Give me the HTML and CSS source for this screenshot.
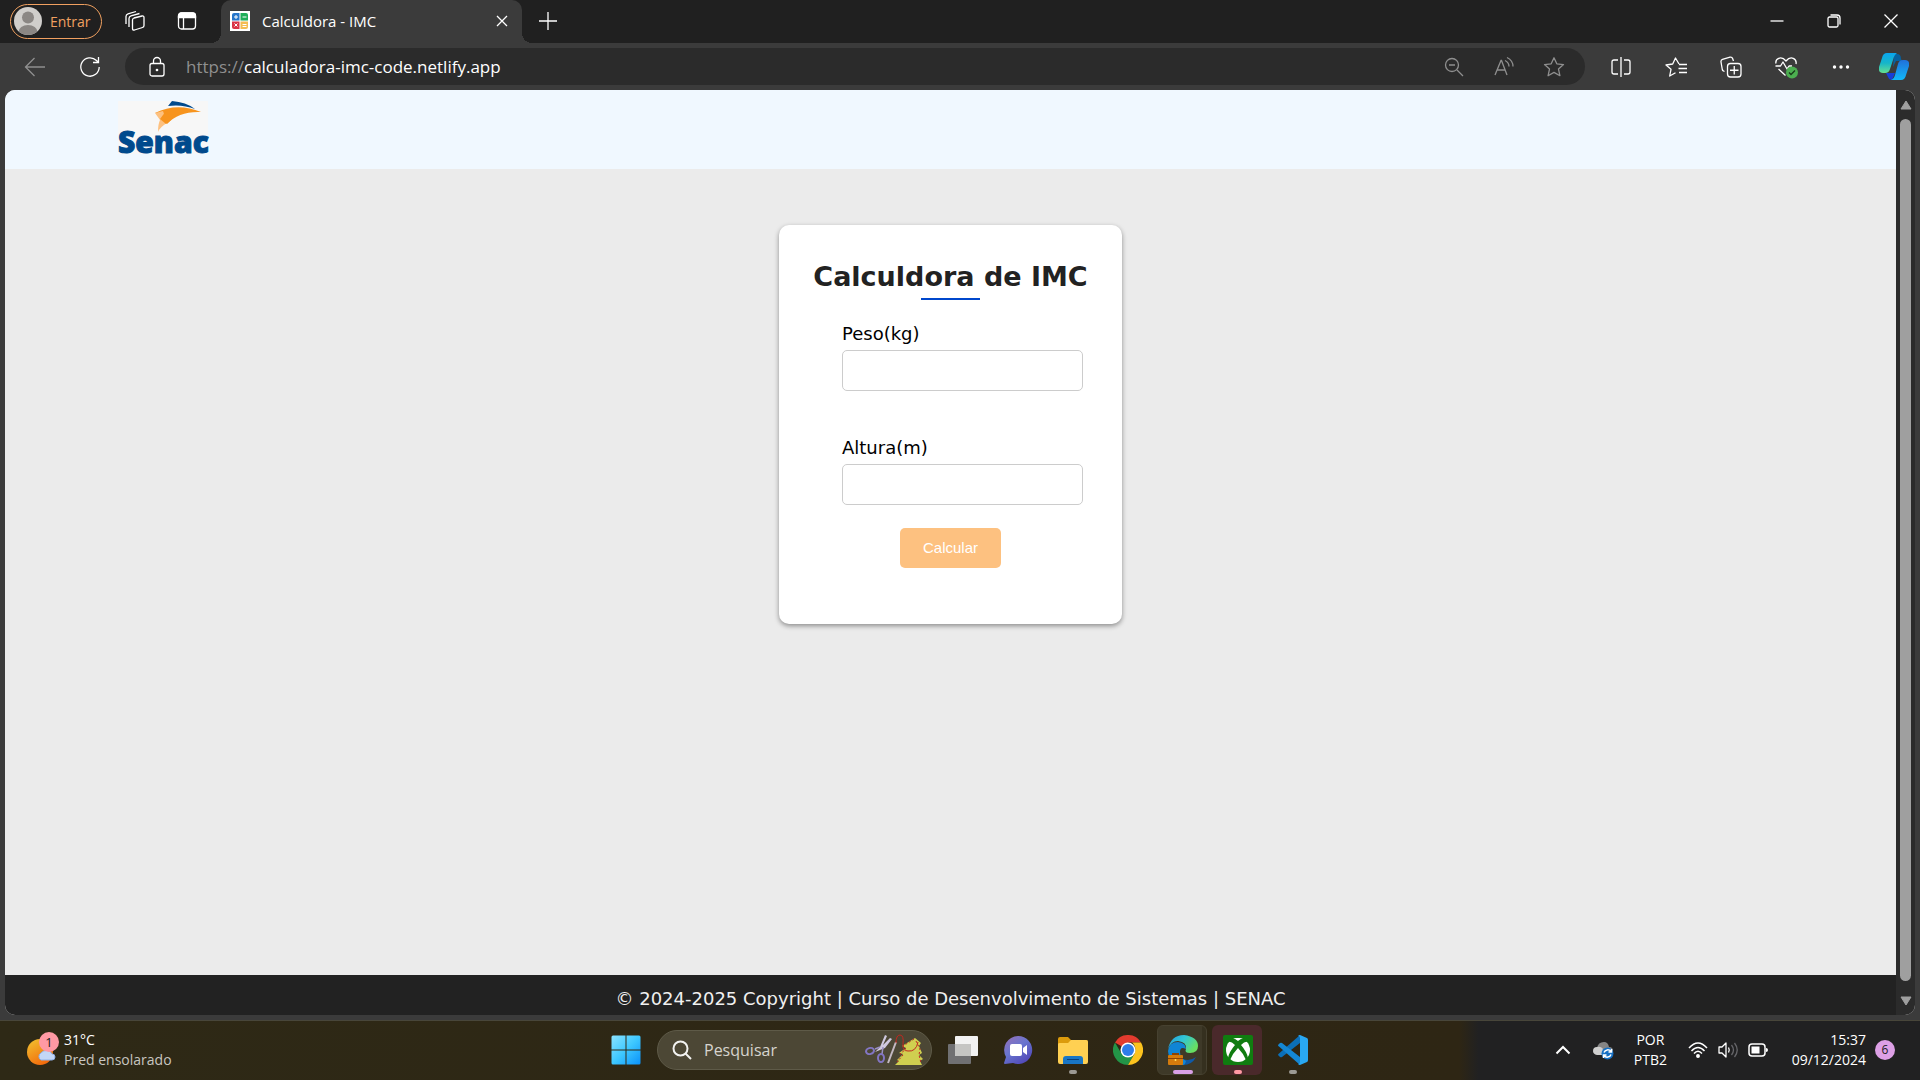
FILE: index.html
```html
<!DOCTYPE html>
<html lang="pt-BR">
<head>
<meta charset="utf-8">
<meta name="viewport" content="width=device-width, initial-scale=1">
<title>Calculdora - IMC</title>
<link rel="stylesheet" href="styles.css">
</head>
<body>
<div class="screen">
  <div class="tabbar">
    <button class="profile" type="button">
      <svg class="avatar" width="28" height="28" viewBox="0 0 28 28"><defs><clipPath id="av"><circle cx="14" cy="14" r="14"/></clipPath></defs><g clip-path="url(#av)"><rect width="28" height="28" fill="#d0cecb"/><circle cx="14" cy="10.500" r="6" fill="#8b8784"/><ellipse cx="14" cy="25" rx="9.500" ry="7" fill="#8b8784"/></g></svg>
      <span>Entrar</span>
    </button>
    <button class="tab-tool" type="button" aria-label="Workspaces">
      <svg class="line" width="22" height="22" viewBox="0 0 22 22"><path stroke-linejoin="round" d="M8.500 10q0-1.500 1.500-2l8-2q2-.4 2 1.500v8q0 1.500-1.500 2l-8 2.500q-2 .5-2-1.500zM5 17V8.500q0-2 2-2.600L15.500 3.500M2 14V6.500q0-2 2-2.600L12 1.500"/></svg>
    </button>
    <button class="tab-tool" type="button" aria-label="Guias">
      <svg class="line" width="20" height="20" viewBox="0 0 20 20"><rect x="1.500" y="2" width="17" height="16" rx="3"/><path d="M6.500 6v12"/><path d="M1.500 6.500V5q0-3 3-3h11q3 0 3 3v1.500z" fill="#fff"/></svg>
    </button>
    <div class="tab">
      <svg width="20" height="20" viewBox="0 0 20 20"><path fill="#fff" d="M0 0h20v20H0z"/><path fill="#2675c9" d="M2 4q0-2 2-2h5.500v7.500H2z"/><path fill="#1fae58" d="M10.500 2H16q2 0 2 2v5.500h-7.500z"/><path fill="#d93448" d="M2 10.500h7.500V18H4q-2 0-2-2z"/><path fill="#f4bc52" d="M10.500 10.500H18V16q0 2-2 2h-5.500z"/><path stroke="#fff" d="M4 6h4M6 4v4M12.500 6h4M4.500 12.500l3 3M7.500 12.500l-3 3M12.500 13.500h4M12.500 15.500h4"/></svg>
      <span class="tab-title">Calculdora - IMC</span>
      <button class="tab-close" type="button" aria-label="Fechar guia"><svg class="line" width="12" height="12" viewBox="0 0 12 12"><path d="M1 1l10 10M11 1L1 11"/></svg></button>
    </div>
    <button class="new-tab" type="button" aria-label="Nova guia"><svg class="line" width="18" height="18" viewBox="0 0 18 18"><path d="M9 0v18M0 9h18"/></svg></button>
    <div class="window-controls">
      <button type="button" aria-label="Minimizar"><svg class="line" width="14" height="14" viewBox="0 0 14 14"><path d="M.5 7h13"/></svg></button>
      <button type="button" aria-label="Restaurar"><svg class="line" width="14" height="14" viewBox="0 0 14 14"><rect x="1" y="3" width="10" height="10" rx="1.500"/><path d="M3.500 1H10q3 0 3 3v6.500"/></svg></button>
      <button type="button" aria-label="Fechar"><svg class="line" width="14" height="14" viewBox="0 0 14 14"><path d="M.5.5l13 13M13.500.5l-13 13"/></svg></button>
    </div>
  </div>

  <div class="toolbar">
    <button class="nav dim" type="button" aria-label="Voltar"><svg class="line" width="22" height="22" viewBox="0 0 22 22"><path d="M21 11H1.500M10.500 2L1.500 11l9 9"/></svg></button>
    <button class="nav" type="button" aria-label="Atualizar"><svg class="line" width="22" height="22" viewBox="0 0 22 22"><path d="M20.200 11A9.200 9.200 0 1 1 17.500 4.500L19.500 6.500M19.500 1v5.500H14"/></svg></button>
    <div class="address">
      <svg class="line lock" width="16" height="22" viewBox="0 0 16 22"><rect x="1" y="7.500" width="14" height="12.500" rx="2"/><path d="M4.500 7.500V5a3.500 3.500 0 0 1 7 0v2.500"/><circle cx="8" cy="14" r=".7"/></svg>
      <span class="url"><span class="scheme">https://</span>calculadora-imc-code.netlify.app</span>
      <div class="address-tools dim">
        <button type="button" aria-label="Zoom"><svg class="line" width="20" height="20" viewBox="0 0 20 20"><circle cx="8" cy="8" r="6.500"/><path d="M13 13l6 6M5 8h6"/></svg></button>
        <button type="button" aria-label="Ler em voz alta"><svg class="line" width="22" height="22" viewBox="0 0 22 22"><path d="M2 19L8 4.500h.5L14 19M4 14h8M12 4.500q4 2 4 6M14 1.500q6 3 6 9"/></svg></button>
        <button type="button" aria-label="Favoritar"><svg class="line" width="22" height="22" viewBox="0 0 22 22"><path stroke-linejoin="round" d="M11 1.800l2.800 6 6.700.8-5 4.500 1.400 6.600L11 16.400l-5.900 3.300 1.400-6.600-5-4.500 6.700-.8z"/></svg></button>
      </div>
    </div>
    <div class="tools">
      <button type="button" aria-label="Dividir tela"><svg class="line" width="20" height="20" viewBox="0 0 20 20"><path d="M7 3H3q-2 0-2 2v10q0 2 2 2h4M13 3h4q2 0 2 2v10q0 2-2 2h-4M10 0v20"/></svg></button>
      <button type="button" aria-label="Favoritos"><svg class="line" width="22" height="22" viewBox="0 0 22 22"><path stroke-linejoin="round" d="M14 8L10.500 2 7.700 8 1 9l5 4.300L4.700 20l5.800-3.200M14 8.500h8M13.500 12.500H22M14 16.500h8"/></svg></button>
      <button type="button" aria-label="Coleções"><svg class="line" width="22" height="22" viewBox="0 0 22 22"><path d="M4.500 15.500l-1-.5q-1-.5-1.200-1.500L1 6q-.3-2 1.500-2.600L10 1.200q2-.4 2.600 1.300l.9 2.500"/><rect x="7.500" y="7.500" width="13.500" height="13.500" rx="3"/><path d="M14.250 10v8.500M10 14.250h8.500"/></svg></button>
      <button type="button" aria-label="Desempenho"><svg class="line" width="24" height="24" viewBox="0 0 24 24"><path stroke-linejoin="round" d="M2 8.500C1 4 7 0 12 6c5-6 11-2 10 3M1.500 11h5l2.500-4 4 7 2-3h3M4.500 14l7 6.500"/><circle cx="18" cy="17.500" r="6" fill="#4caf50" stroke="none"/><path d="M15 17.500l2 2 4-4" stroke="#173a19" /></svg></button>
      <button type="button" aria-label="Mais"><svg width="18" height="6" viewBox="0 0 18 6" fill="#fff"><circle cx="2.500" cy="3" r="1.700"/><circle cx="9" cy="3" r="1.700"/><circle cx="15.500" cy="3" r="1.700"/></svg></button>
      <button type="button" aria-label="Copilot"><svg width="30" height="28" viewBox="0 0 30 28"><defs><linearGradient id="cp1" x1="0" y1="0" x2="0" y2="1"><stop offset="0" stop-color="#0aa5ee"/><stop offset=".5" stop-color="#16b5c9"/><stop offset="1" stop-color="#65df91"/></linearGradient><linearGradient id="cp2" x1="0" y1="0" x2="0" y2="1"><stop offset="0" stop-color="#2170d9"/><stop offset="1" stop-color="#11b9fa"/></linearGradient></defs><path fill="#07619f" d="M15 1h3q4 0 4 5l1 2h-6l-3 6z"/><path fill="#173fd8" d="M7 20h9l-3 7q-3 0-4-3z"/><path fill="url(#cp1)" d="M8 0h10q-3 2-4 7l-3 9q-1 4-5 4H4q-5 0-4-6L3 5q1-5 5-5z"/><path fill="url(#cp2)" d="M22 27H12q3-1 4-5l3-11q1-4 5-4h2q5 0 4 6l-3 9q-1 5-5 5z"/></svg></button>
    </div>
  </div>

  <div class="viewport">
    <div class="page">
      <header class="site-header">
        <svg class="logo" width="90" height="53" viewBox="0 0 90 53" role="img" aria-label="Senac"><path fill="#f7f7f7" d="M0 0h90v53H0z"/><path fill="#004a8d" d="M50 5L54 0q14 1 23 8-13-5-27-3z"/><path fill="#f7941e" d="M37 12q22-11 46-1-22-1-34 12l-7-11z"/><path fill="#fdc180" d="M37 12l8-2 4 12q-7 4-9 9 0-8 2-12z"/><path fill="#f7941e" d="M42 18l6-8 5 9-5 4z"/><text class="logo-word" x="0" y="52">Senac</text></svg>
      </header>
      <main class="content">
        <form class="card">
          <h1>Calculdora de IMC</h1>
          <div class="field"><label for="peso">Peso(kg)</label><input id="peso" type="text"></div>
          <div class="field"><label for="altura">Altura(m)</label><input id="altura" type="text"></div>
          <button class="calc" type="button">Calcular</button>
        </form>
      </main>
      <footer class="site-footer">© 2024-2025 Copyright | Curso de Desenvolvimento de Sistemas | SENAC</footer>
    </div>
    <div class="scrollbar">
      <svg width="12" height="10" viewBox="0 0 12 10"><path fill="#9f9f9f" stroke="#9f9f9f" stroke-linejoin="round" d="M6 1l5 8H1z"/></svg>
      <div class="thumb"></div>
      <svg width="12" height="10" viewBox="0 0 12 10"><path fill="#9f9f9f" stroke="#9f9f9f" stroke-linejoin="round" d="M6 9L1 1h10z"/></svg>
    </div>
  </div>

  <div class="taskbar">
    <div class="weather">
      <svg width="32" height="36" viewBox="0 0 32 36"><defs><linearGradient id="sun" x1="0" y1="0" x2=".6" y2="1"><stop offset="0" stop-color="#f2c530"/><stop offset="1" stop-color="#f26a0c"/></linearGradient></defs><circle cx="13" cy="20" r="13" fill="url(#sun)"/><path fill="#c3d7f7" stroke="#8fb0e6" d="M14 28a4 4 0 0 1 0-7 6 5 0 0 1 11 1 3 3 0 0 1 0 6z"/><circle cx="22" cy="10" r="10" fill="#ff99a4"/><text class="badge-text" x="22" y="15">1</text></svg>
      <div class="weather-text"><span>31°C</span><span class="muted">Pred ensolarado</span></div>
    </div>
    <div class="apps">
      <button class="app" type="button" aria-label="Iniciar"><svg width="30" height="30" viewBox="0 0 30 30"><defs><linearGradient id="win" x1="0" y1="0" x2="1" y2="1"><stop offset="0" stop-color="#8be3ff"/><stop offset=".5" stop-color="#3ec8ff"/><stop offset="1" stop-color="#0a91fa"/></linearGradient></defs><path fill="url(#win)" d="M2 .5h12.500v14H.5V2Q.5.500 2 .5zM15.500.5H28Q29.500.500 29.500 2v12.500h-14zM.5 15.500h14v14H2Q.5 29.500.5 28zM15.500 15.500h14V28q0 1.500-1.500 1.500H15.500z"/></svg></button>
      <label class="search">
        <svg width="20" height="20" viewBox="0 0 20 20" fill="none" stroke="#f2f2f0" stroke-width="2"><circle cx="8.500" cy="8.500" r="7"/><path d="M13.500 13.500L19 19"/></svg>
        <input type="text" placeholder="Pesquisar" aria-label="Pesquisar">
        <svg width="58" height="34" viewBox="0 0 58 34" fill="none"><path fill="#cfc9df" d="M20 2l2 1-4 9 7-7 2 1-7 9-5 2-5 2 5-5z"/><path stroke="#9a90c4" stroke-width="1.500" d="M15 14l-5 2M18 14l-1 7"/><g stroke="#8376c4" stroke-width="2"><ellipse cx="5" cy="18" rx="4" ry="3" transform="rotate(-15 5 18)"/><ellipse cx="16" cy="25" rx="3" ry="4"/></g><path stroke="#c4b9c2" stroke-width="2" d="M23 30L31 9"/><path fill="#d0cf50" d="M50 5l-13 8 4 2-7 5 4 1-6 6 2 1-4 4h27l-2-4 3-2-4-4 3-2-3-7 2-3z"/><g stroke="#c12820"><path d="M31 10q0-8 4-8 4 0 3 9-1 7 5 7 8 1 10-9"/><path stroke-dasharray="2 2" d="M49 6l-11 7 3 3-6 5 3 1-6 7M51 8l4 8-1 6 2 8"/></g></svg>
      </label>
      <button class="app after-search" type="button" aria-label="Visão de tarefas"><svg width="30" height="30" viewBox="0 0 30 30"><rect y="9" width="23" height="20" rx="1" fill="#707072"/><rect x="7" y="1" width="23" height="20" rx="1" fill="#f2f2f2"/><path fill="#c5c5c3" d="M7 9h16v12H8q-1 0-1-1z"/></svg></button>
      <button class="app" type="button" aria-label="Chat"><svg width="30" height="30" viewBox="0 0 30 30"><defs><linearGradient id="chat" x1="0" y1="0" x2=".7" y2="1"><stop offset="0" stop-color="#9870b7"/><stop offset=".5" stop-color="#6875cf"/><stop offset="1" stop-color="#5148b8"/></linearGradient></defs><path fill="url(#chat)" d="M15 1a14 14 0 1 1-5 27l-8 1q-1 0-1-1l2-6A14 14 0 0 1 15 1z"/><rect x="7" y="9" width="12" height="12" rx="2" fill="#fff"/><path fill="#fff" d="M20 13l4-3v10l-4-3z"/></svg></button>
      <button class="app running" type="button" aria-label="Explorador"><svg width="30" height="30" viewBox="0 0 30 30"><path fill="#dc9b0c" d="M0 4q0-2 2-2h8l3 3h15q2 0 2 2v5H0z"/><path fill="#ffd052" d="M0 9q0-1 2-1h8l3-3h15q2 0 2 2v20q0 2-2 2H2q-2 0-2-2z"/><path fill="#1976c5" d="M5 29v-5q0-3 3-3h14q3 0 3 3v5z"/><path stroke="#0a3f7a" d="M9 24.500h12"/></svg></button>
      <button class="app" type="button" aria-label="Chrome"><svg width="30" height="30" viewBox="0 0 30 30"><path fill="#e33b2e" d="M15 15L2 7.500A15 15 0 0 1 28 7.500H15z"/><path fill="#239447" d="M15 30A15 15 0 0 1 2 7.500L8.500 18.750 15 22.500 21.500 18.750z"/><path fill="#fcc31e" d="M15 30l6.500-11.250Q24 12 19 7.500h9A15 15 0 0 1 15 30z"/><circle cx="15" cy="15" r="7.500" fill="#fff"/><circle cx="15" cy="15" r="6" fill="#2f7de9"/></svg></button>
      <button class="app active" type="button" aria-label="Edge"><svg width="30" height="30" viewBox="0 0 30 30"><defs><linearGradient id="eg" x1="0" y1="0" x2="1" y2=".5"><stop offset="0" stop-color="#239dde"/><stop offset=".5" stop-color="#31c5d6"/><stop offset="1" stop-color="#68df62"/></linearGradient></defs><path fill="#0f5aa8" d="M11 13q-3 12 9 12 4 0 8-3-4 8-13 8Q2 28 4 15z"/><path fill="#1085d5" d="M0 16Q1 7 10 7q8 1 8 7-6-3-6 3 0 6 6 9-1 4-3 4Q1 29 0 16z"/><path fill="url(#eg)" d="M0 14Q3 0 16 0q14 2 14 11 0 7-8 7-6 0-4-4 1-7-8-8-7 0-10 8z"/><rect y="20" width="15" height="10" rx="1" fill="#d47b0d"/><path fill="#8b4307" d="M0 23h15v1H0zM4 18h7v2H4z"/><circle cx="7.500" cy="25" r="1" fill="#ffe36a"/></svg></button>
      <button class="app alert" type="button" aria-label="Xbox"><svg width="30" height="30" viewBox="0 0 30 30"><rect width="30" height="30" rx="2" fill="#107c10"/><circle cx="15" cy="15" r="12" fill="#fff"/><path fill="#107c10" d="M8 4q4-1 7 2 3-3 7-2l3 3q-3-1-7 3 6 7 7 13l-2 2Q20 18 15 13 10 18 7 25l-2-2q1-6 7-13-4-4-7-3z"/><path fill="#fff" d="M10 3.500q5-1 10 0-3 0-5 1.500-2-1.500-5-1.500z"/></svg></button>
      <button class="app running" type="button" aria-label="Visual Studio Code"><svg width="30" height="30" viewBox="0 0 30 30"><path fill="#0b6fb8" d="M0 20l2 2q1 .5 2 0L22 8V0L1 18.500q-1 .7-1 1.500z"/><path fill="#1487d4" d="M0 10l2-2q1-.5 2 0l18 14v8L1 11.500Q0 11 0 10z"/><path fill="#29a8f2" d="M22 0l7 3q1 .5 1 2v20q0 1.500-1 2l-7 3q-1 0-2-1 2 0 2-2V3q0-2-2-2 1-1 2-1z"/></svg></button>
    </div>
    <div class="tray">
      <svg class="chevron" width="16" height="10" viewBox="0 0 16 10" fill="none" stroke="#fff" stroke-width="2"><path d="M1.500 8.500L8 2l6.500 6.500"/></svg>
      <svg class="cloud" width="22" height="20" viewBox="0 0 22 20"><path fill="#858585" d="M5 8q1-6 7-6 4 0 5 5 4 0 4 4 0 3-3 3H8z"/><path fill="#cfcfcf" d="M5 15q-4-1-4-4 0-4 4-4 5-1 7 4l4 4z"/><circle cx="15.500" cy="13.500" r="6" fill="#1670c4"/><path stroke="#fff" stroke-width="1.500" fill="none" d="M12 12.500a4 4 0 0 1 7-1M19 14.500a4 4 0 0 1-7 1M19.500 9v3h-3M11.500 18v-3h3"/></svg>
      <div class="lang"><span>POR</span><span>PTB2</span></div>
      <svg class="wifi" width="20" height="18" viewBox="0 0 20 18" fill="none" stroke="#fff" stroke-width="1.500"><path d="M1 7q9-10 18 0M3.500 10q6.500-7 13 0M6 12.500q4-4.500 8 0"/><circle cx="10" cy="15" r="1.200" fill="#fff"/></svg>
      <svg class="sound" width="20" height="18" viewBox="0 0 20 18" fill="none" stroke="#fff" stroke-width="1.300"><path stroke-linejoin="round" d="M1 6h3l4-4v14l-4-4H1zM10.500 6.500q1.500 2.500 0 5"/><path stroke="#66666a" d="M13.500 4q4 5 0 10M16.500 2q5.500 7 0 14"/></svg>
      <svg width="20" height="14" viewBox="0 0 20 14"><rect x="1" y="1" width="16" height="12" rx="3" fill="none" stroke="#fff" stroke-width="1.500"/><path fill="#fff" d="M3.500 3.500h8v7h-8zM18 5q2 0 2 2t-2 2z"/></svg>
      <div class="clock"><span>15:37</span><span>09/12/2024</span></div>
      <span class="count">6</span>
    </div>
  </div>
</div>
</body>
</html>
```
FILE: styles.css
```css
* { box-sizing: border-box; }

body {
  margin: 0;
  font-family: "Open Sans", "Noto Sans", sans-serif;
  font-size: 14px;
  color: #fff;
  background: #3b3b3b;
}

button {
  margin: 0;
  padding: 0;
  border: 0;
  background: none;
  color: inherit;
  font: inherit;
}

svg { display: block; flex: none; }

.line { fill: none; stroke: #fff; stroke-width: 1.3; }
.dim .line, .dim.nav .line { stroke: #8f8f8f; }

.screen {
  min-height: 100vh;
  display: flex;
  flex-direction: column;
}

/* Tab strip */
.tabbar {
  height: 43px;
  display: flex;
  align-items: center;
  padding: 0 1px 1px 10px;
  background: #202020;
}

.profile {
  width: 92px;
  height: 35px;
  padding-left: 3px;
  display: flex;
  align-items: center;
  gap: 8px;
  border: 1px solid #f0a060;
  border-radius: 18px;
  color: #f0a060;
}

.tab-tool {
  width: 52px;
  height: 42px;
  display: grid;
  place-items: center;
}
.profile + .tab-tool { margin-left: 7px; }

.tab {
  position: relative;
  align-self: flex-start;
  width: 301px;
  height: 43px;
  margin-left: 8px;
  padding: 0 10px 1px 9px;
  display: flex;
  align-items: center;
  gap: 12px;
  border-radius: 10px 10px 0 0;
  background: #3b3b3b;
}
.tab::before, .tab::after {
  content: "";
  position: absolute;
  bottom: 0;
  width: 10px;
  height: 10px;
}
.tab::before { right: 100%; background: radial-gradient(circle at 0 0, #202020 10px, #3b3b3b 10px); }
.tab::after { left: 100%; background: radial-gradient(circle at 100% 0, #202020 10px, #3b3b3b 10px); }
.tab-title { flex: 1; font-size: 15px; line-height: 20px; }
.tab-close { width: 20px; height: 20px; display: grid; place-items: center; }
.new-tab { width: 52px; height: 42px; display: grid; place-items: center; }

.window-controls { display: flex; margin-left: auto; }
.window-controls button { width: 57px; height: 42px; display: grid; place-items: center; }

/* Address row */
.toolbar {
  height: 47px;
  display: flex;
  align-items: center;
  padding-left: 7px;
}
.nav { width: 55px; height: 40px; display: grid; place-items: center; }

.address {
  flex: 1;
  height: 37px;
  margin-left: 8px;
  padding: 0 6px 0 24px;
  display: flex;
  align-items: center;
  border-radius: 19px;
  background: #2b2b2b;
}
.url { margin-left: 21px; font-size: 17px; line-height: 22px; }
.scheme { color: #8f8f8f; }
.address-tools { display: flex; margin-left: auto; }
.address-tools button { width: 50px; height: 36px; display: grid; place-items: center; }
.tools { display: flex; margin-left: 8px; }
.tools button { width: 55px; height: 40px; display: grid; place-items: center; }
.tools button:last-child { width: 52px; }

/* Page frame */
.viewport {
  flex: 1;
  margin: 0 5px 5px;
  display: flex;
  border-radius: 10px;
  overflow: hidden;
  background: #ebebeb;
}
.page { flex: 1; display: flex; flex-direction: column; }

.scrollbar {
  width: 19px;
  padding: 10px 0 9px;
  display: flex;
  flex-direction: column;
  align-items: center;
  background: #2b2b2b;
}
.thumb {
  flex: 1;
  width: 11px;
  margin: 9px 0 15px;
  border-radius: 6px;
  background: #9f9f9f;
}

.site-header {
  height: 79px;
  padding: 11px 113px;
  background: #f0f8ff;
}
.logo { overflow: visible; }
.logo-word {
  font: 800 30px "Open Sans", sans-serif;
  fill: #004a8d;
  stroke: #004a8d;
  stroke-width: 1;
}

.content {
  flex: 1;
  padding-top: 56px;
  display: flex;
  justify-content: center;
  align-items: flex-start;
  font-family: "DejaVu Sans", Verdana, sans-serif;
}

.card {
  width: 343px;
  padding: 34px 0 56px;
  display: flex;
  flex-direction: column;
  align-items: center;
  border-radius: 10px;
  background: #fff;
  box-shadow: 0 2px 5px rgba(0, 0, 0, .4);
}
.card h1 {
  margin: 0;
  font-size: 27px;
  line-height: 36px;
  color: #222;
  white-space: nowrap;
}
.card h1::after {
  content: "";
  display: block;
  width: 59px;
  height: 2px;
  margin: 3px auto 0;
  background: #0047cc;
}

.field {
  width: 241px;
  margin: 22px 0 0 24px;
  display: flex;
  flex-direction: column;
  gap: 4px;
  color: #000;
}
.field + .field { margin-top: 45px; }
.field label { font-size: 18px; line-height: 24px; }
.field input {
  height: 41px;
  padding: 0 12px;
  border: 1px solid #ccc;
  border-radius: 5px;
  background: #fff;
  font: 16px "Liberation Sans", Arial, sans-serif;
}

.calc {
  width: 101px;
  height: 40px;
  margin-top: 23px;
  padding-bottom: 2px;
  border-radius: 5px;
  background: #fdc180;
  font: 15px "Liberation Sans", Arial, sans-serif;
}

.site-footer {
  height: 40px;
  padding-top: 4px;
  background: #222;
  color: #f0f0f0;
  font: 18px/40px "DejaVu Sans", Verdana, sans-serif;
  text-align: center;
}

/* Taskbar */
.taskbar {
  height: 60px;
  padding-bottom: 2px;
  display: grid;
  grid-template-columns: 1fr auto 1fr;
  align-items: center;
  border-top: 1px solid #48463a;
  background: linear-gradient(90deg, #2e2916 0, #2e2614 76%, #212122 77%, #212122 100%);
}
.weather { display: flex; align-items: center; gap: 5px; padding-left: 27px; }
.weather-text, .lang, .clock { display: flex; flex-direction: column; line-height: 20px; }
.muted { color: #c8c6c0; }
.badge-text { font-size: 13px; text-anchor: middle; fill: #202020; }

.apps { display: flex; align-items: center; padding-right: 2px; }
.app {
  position: relative;
  width: 55px;
  height: 50px;
  display: grid;
  place-items: center;
}
.after-search { margin-left: 3px; }
.app svg { position: relative; }
.running::after, .active::after, .alert::after {
  content: "";
  position: absolute;
  bottom: 1px;
  left: 50%;
  width: 8px;
  height: 4px;
  margin-left: -4px;
  border-radius: 2px;
  background: #9c9a94;
}
.active::after { width: 20px; margin-left: -10px; background: #d9a0e6; }
.alert::after { background: #ff99a4; }
.active::before, .alert::before {
  content: "";
  position: absolute;
  inset: 0 3px 0 2px;
  border-radius: 6px;
}
.active::before {
  background: linear-gradient(90deg, #3e3928 44px, #35301f 44px);
  border: 1px solid #464130;
}
.alert::before { background: #4a292b; }

.search {
  width: 275px;
  height: 40px;
  margin-left: 4px;
  padding: 0 8px 0 14px;
  display: flex;
  align-items: center;
  gap: 12px;
  border: 1px solid #5e5a48;
  border-radius: 20px;
  background: #4c4735;
}
.search input {
  flex: 1;
  min-width: 0;
  padding: 0;
  border: 0;
  background: none;
  font: inherit;
  font-size: 16px;
}
.search input::placeholder { color: #d6d4ce; opacity: 1; }

.tray {
  display: flex;
  align-items: center;
  justify-content: flex-end;
  padding-right: 25px;
}
.chevron { margin-right: 21px; }
.lang { margin: 0 21px 0 20px; align-items: center; }
.sound { margin: 0 10px; }
.clock { width: 88px; margin: 0 9px 0 10px; align-items: flex-end; }
.count {
  width: 20px;
  height: 20px;
  border-radius: 50%;
  background: #dda0e6;
  color: #202020;
  font-size: 12px;
  line-height: 20px;
  text-align: center;
}
```
